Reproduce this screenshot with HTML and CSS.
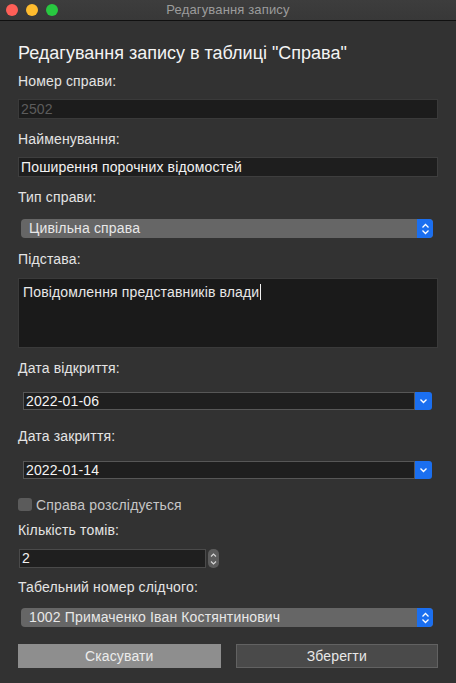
FILE: index.html
```html
<!DOCTYPE html>
<html lang="uk">
<head>
<meta charset="utf-8">
<title>Редагування запису</title>
<link rel="stylesheet" href="styles.css">
</head>
<body>
<div class="window">
  <div class="titlebar">
    <div class="lights">
      <span class="light red"></span>
      <span class="light yellow"></span>
      <span class="light green"></span>
    </div>
    <div class="title">Редагування запису</div>
  </div>
  <div class="content">
    <h1 class="heading">Редагування запису в таблиці "Справа"</h1>

    <div class="label l1">Номер справи:</div>
    <div class="field disabled f1">2502</div>

    <div class="label l2">Найменування:</div>
    <div class="field f2">Поширення порочних відомостей</div>

    <div class="label l3">Тип справи:</div>
    <div class="select s1">
      <span class="select-text">Цивільна справа</span>
      <span class="select-btn">
        <svg width="9" height="12" viewBox="0 0 9 12"><path d="M1.5 4.5 L4.5 1.5 L7.5 4.5 M1.5 7.5 L4.5 10.5 L7.5 7.5" fill="none" stroke="#fff" stroke-width="1.3"/></svg>
      </span>
    </div>

    <div class="label l4">Підстава:</div>
    <div class="textarea">Повідомлення представників влади<span class="caret"></span></div>

    <div class="label l5">Дата відкриття:</div>
    <div class="date d1">
      <span class="date-box">2022-01-06</span>
      <span class="date-btn">
        <svg width="9" height="6" viewBox="0 0 9 6"><path d="M1.5 1.5 L4.5 4.5 L7.5 1.5" fill="none" stroke="#fff" stroke-width="1.4"/></svg>
      </span>
    </div>

    <div class="label l6">Дата закриття:</div>
    <div class="date d2">
      <span class="date-box">2022-01-14</span>
      <span class="date-btn">
        <svg width="9" height="6" viewBox="0 0 9 6"><path d="M1.5 1.5 L4.5 4.5 L7.5 1.5" fill="none" stroke="#fff" stroke-width="1.4"/></svg>
      </span>
    </div>

    <div class="check">
      <span class="box"></span>
      <span class="check-text">Справа розслідується</span>
    </div>

    <div class="label l7">Кількість томів:</div>
    <div class="spin">
      <span class="spin-box">2</span>
      <span class="spin-btn">
        <svg width="7" height="14" viewBox="0 0 7 14"><path d="M1 4.5 L3.5 2 L6 4.5 M1 9.5 L3.5 12 L6 9.5" fill="none" stroke="#d8d8d8" stroke-width="1.1"/></svg>
      </span>
    </div>

    <div class="label l8">Табельний номер слідчого:</div>
    <div class="select s2">
      <span class="select-text">1002 Примаченко Іван Костянтинович</span>
      <span class="select-btn">
        <svg width="9" height="12" viewBox="0 0 9 12"><path d="M1.5 4.5 L4.5 1.5 L7.5 4.5 M1.5 7.5 L4.5 10.5 L7.5 7.5" fill="none" stroke="#fff" stroke-width="1.3"/></svg>
      </span>
    </div>

    <div class="buttons">
      <div class="btn cancel">Скасувати</div>
      <div class="btn save">Зберегти</div>
    </div>
  </div>
</div>
</body>
</html>
```

FILE: styles.css
```css
* { box-sizing: border-box; }
html, body { margin: 0; padding: 0; }
body {
  width: 456px;
  height: 683px;
  background: #323232;
  font-family: "Liberation Sans", Arial, sans-serif;
  color: #e6e6e6;
  letter-spacing: 0.15px;
  overflow: hidden;
}
.window {
  width: 456px;
  height: 683px;
  background: #323232;
}
.titlebar {
  position: relative;
  height: 21px;
  background: linear-gradient(#3d3d3d, #383838);
  border-bottom: 1px solid #101010;
  display: flex;
  align-items: center;
  justify-content: center;
}
.lights {
  position: absolute;
  left: 6px;
  top: 4px;
  display: flex;
  gap: 8px;
}
.light {
  width: 12px;
  height: 12px;
  border-radius: 50%;
  display: block;
}
.red { background: #fe5f57; }
.yellow { background: #febc2e; }
.green { background: #28c840; }
.title {
  font-size: 13px;
  color: #9c9c9c;
  line-height: 20px;
}
.content {
  padding: 0 18px;
}
.heading {
  margin: 22px 0 0 0;
  font-size: 18px;
  line-height: 20px;
  font-weight: normal;
  color: #f4f4f4;
  letter-spacing: 0;
}
.label {
  font-size: 14px;
  line-height: 16px;
  color: #e4e4e4;
}
.l1 { margin-top: 10px; }
.l2 { margin-top: 12px; }
.l3 { margin-top: 12px; }
.l4 { margin-top: 13px; }
.l5 { margin-top: 12px; }
.l6 { margin-top: 18px; }
.l7 { margin-top: 11px; }
.l8 { margin-top: 11px; }

.field {
  height: 20px;
  width: 420px;
  background: #1e1e1e;
  border: 1px solid #3e3e3e;
  font-size: 14px;
  line-height: 18px;
  padding-left: 2px;
  color: #f2f2f2;
}
.f1 { margin-top: 10px; }
.f2 { margin-top: 10px; }
.field.disabled {
  color: #5c5c5c;
  background: #1c1c1c;
  border-color: #3a3a3a;
}

.select {
  height: 19px;
  width: 412px;
  margin-left: 3px;
  background: #666666;
  border-radius: 4px;
  display: flex;
  align-items: stretch;
  overflow: hidden;
}
.s1 { margin-top: 14px; }
.s2 { margin-top: 13px; }
.select-text {
  flex: 1;
  font-size: 14px;
  line-height: 19px;
  padding-left: 8px;
  color: #e8e8e8;
}
.select-btn {
  width: 16px;
  background: #1b6ff0;
  display: flex;
  align-items: center;
  justify-content: center;
}

.textarea {
  margin-top: 11px;
  height: 70px;
  width: 420px;
  background: #1a1a1a;
  border: 1px solid #3a3a3a;
  font-size: 14px;
  line-height: 18px;
  padding: 4px 0 0 4px;
  color: #e8e8e8;
}
.caret {
  display: inline-block;
  width: 1px;
  height: 16px;
  background: #f0f0f0;
  vertical-align: -3px;
  margin-left: 1px;
}

.date {
  display: flex;
  height: 18px;
  margin-left: 5px;
  width: 409px;
}
.d1 { margin-top: 16px; }
.d2 { margin-top: 17px; }
.date-box {
  width: 392px;
  background: #1f1f1f;
  border: 1px solid #575757;
  font-size: 14px;
  line-height: 16px;
  padding-left: 2px;
  color: #f4f4f4;
}
.date-btn {
  width: 17px;
  background: #1b6ff0;
  border-radius: 0 3px 3px 0;
  display: flex;
  align-items: center;
  justify-content: center;
}

.check {
  margin-top: 19px;
  display: flex;
  align-items: center;
  height: 13px;
}
.box {
  width: 14px;
  height: 13px;
  background: #5b5b5b;
  border-radius: 3px;
}
.check-text {
  margin-left: 4px;
  font-size: 14px;
  line-height: 16px;
  color: #c6c6c6;
}

.spin {
  margin-top: 11px;
  display: flex;
  align-items: center;
  height: 19px;
  margin-left: 1px;
}
.spin-box {
  width: 187px;
  height: 19px;
  background: #1f1f1f;
  border: 1px solid #4a4a4a;
  font-size: 14px;
  line-height: 17px;
  padding-left: 2px;
  color: #f2f2f2;
}
.spin-btn {
  margin-left: 2px;
  width: 11px;
  height: 19px;
  background: #5c5c5c;
  border-radius: 5px;
  display: flex;
  align-items: center;
  justify-content: center;
}

.buttons {
  margin-top: 17px;
  display: flex;
  gap: 15px;
}
.btn {
  height: 24px;
  width: 203px;
  font-size: 14px;
  line-height: 22px;
  text-align: center;
}
.cancel {
  background: #8e8e8e;
  border: 1px solid #8e8e8e;
  color: #ececec;
}
.save {
  background: #4a4a4a;
  border: 1px solid #626262;
  color: #e8e8e8;
}
```
